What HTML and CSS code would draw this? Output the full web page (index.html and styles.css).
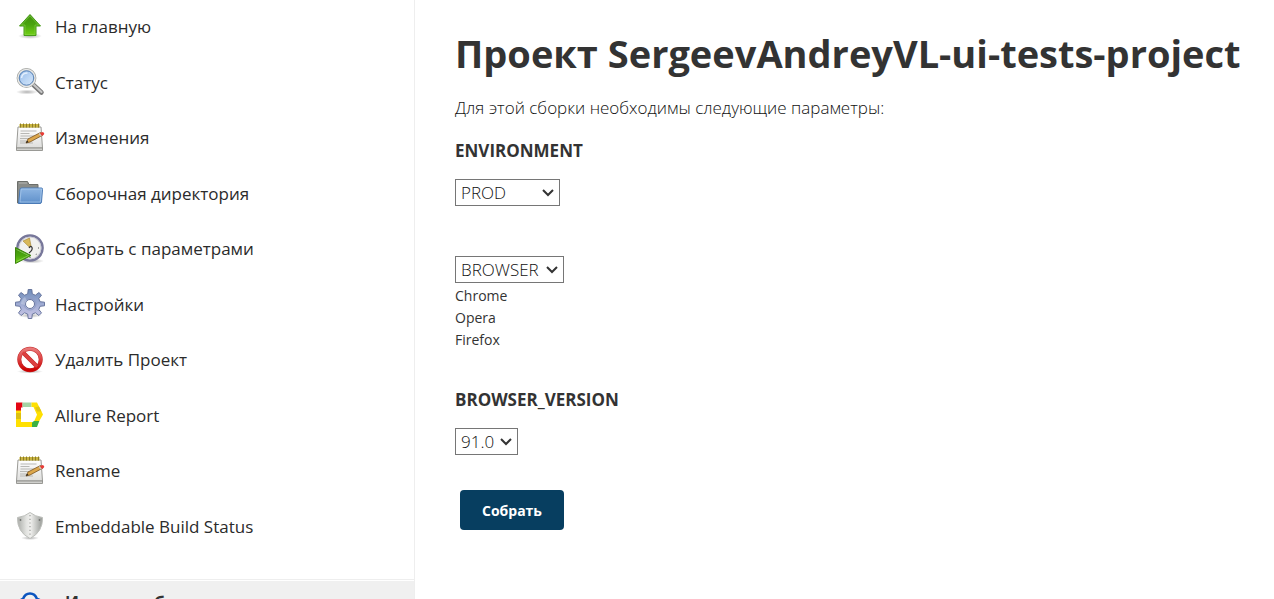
FILE: index.html
```html
<!DOCTYPE html>
<html lang="ru">
<head>
<meta charset="utf-8">
<meta name="viewport" content="width=device-width, initial-scale=1">
<title>SergeevAndreyVL-ui-tests-project</title>
<link rel="stylesheet" href="styles.css">
</head>
<body>
<svg class="defs" aria-hidden="true">
  <defs>
    <linearGradient id="green" x1="0" y1="0" x2="0" y2="1"><stop offset="0" stop-color="#3f8f0c"/><stop offset=".5" stop-color="#4aa50e"/><stop offset="1" stop-color="#73d216"/></linearGradient>
    <radialGradient id="shade"><stop offset="0" stop-color="#000" stop-opacity=".3"/><stop offset="1" stop-color="#000" stop-opacity="0"/></radialGradient>
    <linearGradient id="glass" x1="0" y1="0" x2="1" y2="1"><stop offset="0" stop-color="#8db6e8"/><stop offset=".55" stop-color="#bcd6f4"/><stop offset="1" stop-color="#dcebfb"/></linearGradient>
    <linearGradient id="paper" x1="0" y1="0" x2="0" y2="1"><stop offset="0" stop-color="#fff"/><stop offset="1" stop-color="#dededc"/></linearGradient>
    <linearGradient id="folder" x1="0" y1="0" x2="0" y2="1"><stop offset="0" stop-color="#8db5e2"/><stop offset="1" stop-color="#5e8fca"/></linearGradient>
    <linearGradient id="gear" x1="0" y1="0" x2="0" y2="1"><stop offset="0" stop-color="#6f8cb8"/><stop offset=".5" stop-color="#9eabd3"/><stop offset="1" stop-color="#cfc9e8"/></linearGradient>
    <linearGradient id="red" x1="0" y1="0" x2="0" y2="1"><stop offset="0" stop-color="#e87878"/><stop offset=".5" stop-color="#dc4040"/><stop offset="1" stop-color="#cc0000"/></linearGradient>
    <linearGradient id="steel" x1="0" y1="0" x2="1" y2="0"><stop offset="0" stop-color="#aaaca8"/><stop offset=".35" stop-color="#e2e3e0"/><stop offset=".52" stop-color="#f0f0ee"/><stop offset="1" stop-color="#979a96"/></linearGradient>
    <symbol id="notepad" viewBox="0 0 30 30">
      <path d="M3 4h23l1.500 21H1.500z" fill="url(#paper)" stroke="#9a9a96"/>
      <path d="M1.500 25h26v2.500h-26z" fill="#d0d0cd" stroke="#858581" stroke-width=".8"/>
      <path d="M4.500 1h20v3.500h-20z" fill="#c8b440"/>
      <path d="M5.500 .5v4m3-4v4m3-4v4m3-4v4m3-4v4m3-4v4m3-4v4" stroke="#8d7c28" stroke-width="1"/>
      <path d="M5.500 8h16M5.500 10.500h9M5.500 13h14M5 15.500h10M5 18h6M5 20h13" stroke="#b8b8b5"/>
      <path d="M11 20 13 16 25.500 9.500 28 12 15 19z" fill="#dca74c" stroke="#79501c" stroke-width=".8"/>
      <path d="m11 20 1-2.500 1.500 1.500z" fill="#222"/>
      <path d="m25 10.500 2-1.500q3.500 .5 1.500 3l-2 1z" fill="#e83b37"/>
      <path d="m24 10.500 2.300 2.700" stroke="#c8c8c8" stroke-width="1.200"/>
    </symbol>
  </defs>
</svg>
<div class="page">
  <aside class="sidebar">
    <nav>
      <ul class="tasks">
        <li><a class="task" href="#"><svg class="icon" viewBox="0 0 30 30" aria-hidden="true"><ellipse cx="15" cy="24" rx="12" ry="3" fill="url(#shade)"/><path d="M15 2.500 25.500 14H21v9.500H9V14H4.500z" fill="url(#green)" stroke="#479b17" stroke-linejoin="round"/><path d="M15 4 23.500 13H20v9.500H10V13H6.500z" fill="none" stroke="#8bd44f" stroke-opacity=".55"/></svg>На главную</a></li>
        <li><a class="task" href="#"><svg class="icon" viewBox="0 0 30 30" aria-hidden="true"><ellipse cx="12" cy="25" rx="11" ry="2.500" fill="url(#shade)"/><path d="m18.500 18 8 7.500" stroke="#777" stroke-width="4.500" stroke-linecap="round"/><path d="m19 18 7.500 7" stroke="#c7c7c7" stroke-width="2.200" stroke-linecap="round"/><circle cx="11.500" cy="11" r="8.800" fill="url(#glass)" stroke="#a4a6a3" stroke-width="2.200"/><circle cx="11.500" cy="11" r="8.500" fill="none" stroke="#e9e9e7" stroke-width="1.300"/><circle cx="11.500" cy="11" r="7.200" fill="none" stroke="#5e86b8"/><path d="M6.500 11q.5-5 6-5" stroke="#e4effc" stroke-width="1.500" fill="none"/></svg>Статус</a></li>
        <li><a class="task" href="#"><svg class="icon" viewBox="0 0 30 30" aria-hidden="true"><use href="#notepad"/></svg>Изменения</a></li>
        <li><a class="task" href="#"><svg class="icon" viewBox="0 0 30 30" aria-hidden="true"><path d="M2.500 25V3.500h10l1.500 3h9V25z" fill="#8a8c88" stroke="#6c6e6a"/><path d="M4 5h8" stroke="#b5b6b3"/><path d="M5 11.500q.2-1.500 1.500-1.500h20q1.200 0 1 1.500l-1 12.500q-.2 1.500-1.500 1.500H3.500z" fill="url(#folder)" stroke="#4a7ab6"/><path d="M6 12q.1-1 1-1h19.500L25.300 24H5z" fill="none" stroke="#b6d2f0" stroke-opacity=".6"/></svg>Сборочная директория</a></li>
        <li><a class="task" href="#"><svg class="icon" viewBox="0 0 30 30" aria-hidden="true"><ellipse cx="17" cy="27" rx="12" ry="2.500" fill="url(#shade)"/><circle cx="15" cy="14" r="12.600" fill="#f1f1ee" stroke="#77779a" stroke-width="2.500"/><circle cx="15" cy="14" r="11" fill="none" stroke="#c2c2cf" stroke-width=".8"/><path d="m8 7 6.500-3 1.500 8-2 .8z" fill="#d8b858" stroke="#a38533" stroke-width=".6"/><path d="M14 14q2-3 3-.5t-3 5.500" fill="none" stroke="#333" stroke-width="1.200"/><path d="M23 14h1m-9 9v1M21 20l.6.6" stroke="#888" stroke-width="1.500"/><path d="M.5 13.500 16 21.500.5 29.500z" fill="url(#green)" stroke="#3d8410"/><path d="m1.500 15.500 12 6-12 6" fill="none" stroke="#a2dc78" stroke-opacity=".7" stroke-width=".8"/></svg>Собрать с параметрами</a></li>
        <li><a class="task" href="#"><svg class="icon" viewBox="0 0 30 30" aria-hidden="true"><ellipse cx="15" cy="26.500" rx="12" ry="2.500" fill="url(#shade)"/><path fill-rule="evenodd" d="M12.700 4.900 13.200.5h3.600l.5 4.400 3.100 1.300 3.500-2.700 2.600 2.600-2.700 3.500 1.300 3.100 4.400.5v3.600l-4.400.5-1.300 3.100 2.700 3.500-2.600 2.600-3.500-2.700-3.100 1.300-.5 4.400h-3.600l-.5-4.400-3.100-1.300-3.500 2.700-2.600-2.600 2.700-3.500-1.300-3.100-4.400-.5v-3.600l4.400-.5 1.300-3.100-2.700-3.500 2.600-2.600 3.500 2.700zM15 10.500a4.500 4.500 0 1 0 0 9 4.500 4.500 0 0 0 0-9z" fill="url(#gear)" stroke="#5e6c96" stroke-width=".9" stroke-linejoin="round"/><circle cx="15" cy="15" r="6" fill="none" stroke="#8c98c2" stroke-width=".8"/><path d="M6 15a9 9 0 0 1 4-7l2 4q-2 1-2 4z" fill="#fff" fill-opacity=".25"/></svg>Настройки</a></li>
        <li><a class="task" href="#"><svg class="icon" viewBox="0 0 30 30" aria-hidden="true"><ellipse cx="15" cy="26.500" rx="13" ry="2" fill="url(#shade)"/><circle cx="15" cy="14.500" r="10.700" fill="none" stroke="#c32727" stroke-width="4"/><path d="m8 7.500 14 14" stroke="#c32727" stroke-width="4.200"/><circle cx="15" cy="14.500" r="10.700" fill="none" stroke="url(#red)" stroke-width="3"/><path d="m7.800 7.300 14.400 14.400" stroke="#dc4040" stroke-width="3.200"/></svg>Удалить Проект</a></li>
        <li><a class="task" href="#"><svg class="icon" viewBox="0 0 30 30" aria-hidden="true"><path d="M1 9.500h5v12.500h11v5H1z" fill="#ffe001"/><path d="M1 13h5v6H1z" fill="#dcc012"/><path d="M1 2.500h6.500v5H6v3H1z" fill="#e30613"/><path d="M7.500 2.500h9v4.500h-9z" fill="#a5d3a5"/><path d="M16.500 2.500H22L28 14.500 24 21.500h-5L22 14.800 18.500 7h-2z" fill="#ffe001"/><path d="m24 6.500 2.500 5H22l-2-4z" fill="#e2c812"/><path d="M19 21h5.300L22 27h-5v-4.500z" fill="#3bb143"/></svg>Allure Report</a></li>
        <li><a class="task" href="#"><svg class="icon" viewBox="0 0 30 30" aria-hidden="true"><use href="#notepad"/></svg>Rename</a></li>
        <li><a class="task" href="#"><svg class="icon" viewBox="0 0 30 30" aria-hidden="true"><ellipse cx="15" cy="27" rx="9" ry="2" fill="url(#shade)"/><path d="M15 1.500Q10 5.500 2.500 6.500q-.5 14.500 12.500 21 13-6.500 12.500-21Q20 5.500 15 1.500z" fill="url(#steel)" stroke="#bdbfbb"/><path d="M15 4v21" stroke="#a2a4a0" stroke-dasharray="1.200 2.500" stroke-width="1.300"/><circle cx="5.500" cy="9" r=".9" fill="#70726f"/><circle cx="24.500" cy="9" r=".9" fill="#70726f"/></svg>Embeddable Build Status</a></li>
      </ul>
    </nav>
    <section class="history">
      <h2 class="history-title"><svg class="history-icon" viewBox="0 0 30 30" aria-hidden="true"><path d="M4 18Q4 13 8 12 10 6.500 15 6.500q5 0 7 5.500 5 1 5 6t-6 7H8q-4-1-4-7z" fill="none" stroke="#0b55c0" stroke-width="2.500"/></svg>История сборок</h2>
    </section>
  </aside>
  <main class="main">
    <h1 class="title">Проект SergeevAndreyVL-ui-tests-project</h1>
    <p class="intro">Для этой сборки необходимы следующие параметры:</p>
    <form class="form">
      <div class="field">
        <label class="label" for="env">ENVIRONMENT</label>
        <div class="picker picker-env"><select class="select" id="env"><option>PROD</option></select><svg class="chevron" viewBox="0 0 12 8" aria-hidden="true"><path d="m1 1 5 5 5-5"/></svg></div>
      </div>
      <div class="field field-browser">
        <div class="picker picker-browser"><select class="select" aria-label="BROWSER"><option>BROWSER</option></select><svg class="chevron" viewBox="0 0 12 8" aria-hidden="true"><path d="m1 1 5 5 5-5"/></svg></div>
        <ul class="browsers"><li>Chrome</li><li>Opera</li><li>Firefox</li></ul>
      </div>
      <div class="field">
        <label class="label" for="version">BROWSER_VERSION</label>
        <div class="picker picker-version"><select class="select" id="version"><option>91.0</option></select><svg class="chevron" viewBox="0 0 12 8" aria-hidden="true"><path d="m1 1 5 5 5-5"/></svg></div>
      </div>
      <button class="submit" type="button">Собрать</button>
    </form>
  </main>
</div>
</body>
</html>
```
FILE: styles.css
```css
* { box-sizing: border-box; }

body {
  margin: 0;
  background: #fff;
  color: #333;
  font-family: "Open Sans", "Noto Sans", sans-serif;
  font-size: 17px;
}

.defs { position: absolute; width: 0; height: 0; }

.page {
  display: flex;
  height: 100vh;
  overflow: hidden;
}

.sidebar {
  flex: 0 0 415px;
  margin-top: -1px;
  border-right: 1px solid #eee;
}

.tasks {
  list-style: none;
  margin: 0;
  padding: 0 0 25px;
  border-bottom: 1px solid #eee;
}

.task {
  display: flex;
  align-items: center;
  gap: 10px;
  padding: 15px;
  color: #2b2b2b;
  font-weight: 500;
  line-height: 1.5;
  text-decoration: none;
}

.icon {
  flex: none;
  width: 30px;
  height: 30px;
  margin: -3px 0;
}

.history {
  margin-top: 1px;
  padding: 6px 15px;
  background: #f0f0f0;
}

.history-title {
  display: flex;
  align-items: flex-start;
  gap: 20px;
  margin: 0;
  font-size: 17px;
  font-weight: 700;
  line-height: 32px;
}

.history-icon { width: 30px; height: 30px; }

.main {
  flex: 1;
  min-width: 0;
  padding: 25px 20px 0 40px;
}

.title {
  margin: 0 0 13px;
  font-size: 38px;
  font-weight: 700;
  line-height: 56px;
  white-space: nowrap;
}

.intro {
  margin: 0 0 16px;
  color: #111;
  font-weight: 300;
  line-height: 28px;
}

.field { margin-bottom: 35px; }
.field-browser { padding-top: 15px; }

.label {
  display: block;
  margin-bottom: 15px;
  font-weight: 700;
  line-height: 26px;
}

.picker { position: relative; }
.picker-env { width: 105px; }
.picker-browser { width: 109px; }
.picker-version { width: 63px; }

.select {
  display: block;
  width: 100%;
  height: 27px;
  padding: 0 5px;
  appearance: none;
  border: 1px solid #767676;
  border-radius: 0;
  background: #fff;
  color: #111;
  font: 300 17px "Open Sans", "Noto Sans", sans-serif;
}

.chevron {
  position: absolute;
  top: 10px;
  right: 6px;
  width: 12px;
  height: 8px;
  fill: none;
  stroke: #333;
  stroke-width: 2;
  pointer-events: none;
}

.browsers {
  list-style: none;
  margin: 0;
  padding: 2px 0 1px;
  font-size: 14px;
  line-height: 22px;
}

.submit {
  height: 40px;
  margin-left: 5px;
  padding: 0 22px;
  border: 0;
  border-radius: 4px;
  background: #073e60;
  color: #fff;
  font: 700 14px "Open Sans", "Noto Sans", sans-serif;
}
```
